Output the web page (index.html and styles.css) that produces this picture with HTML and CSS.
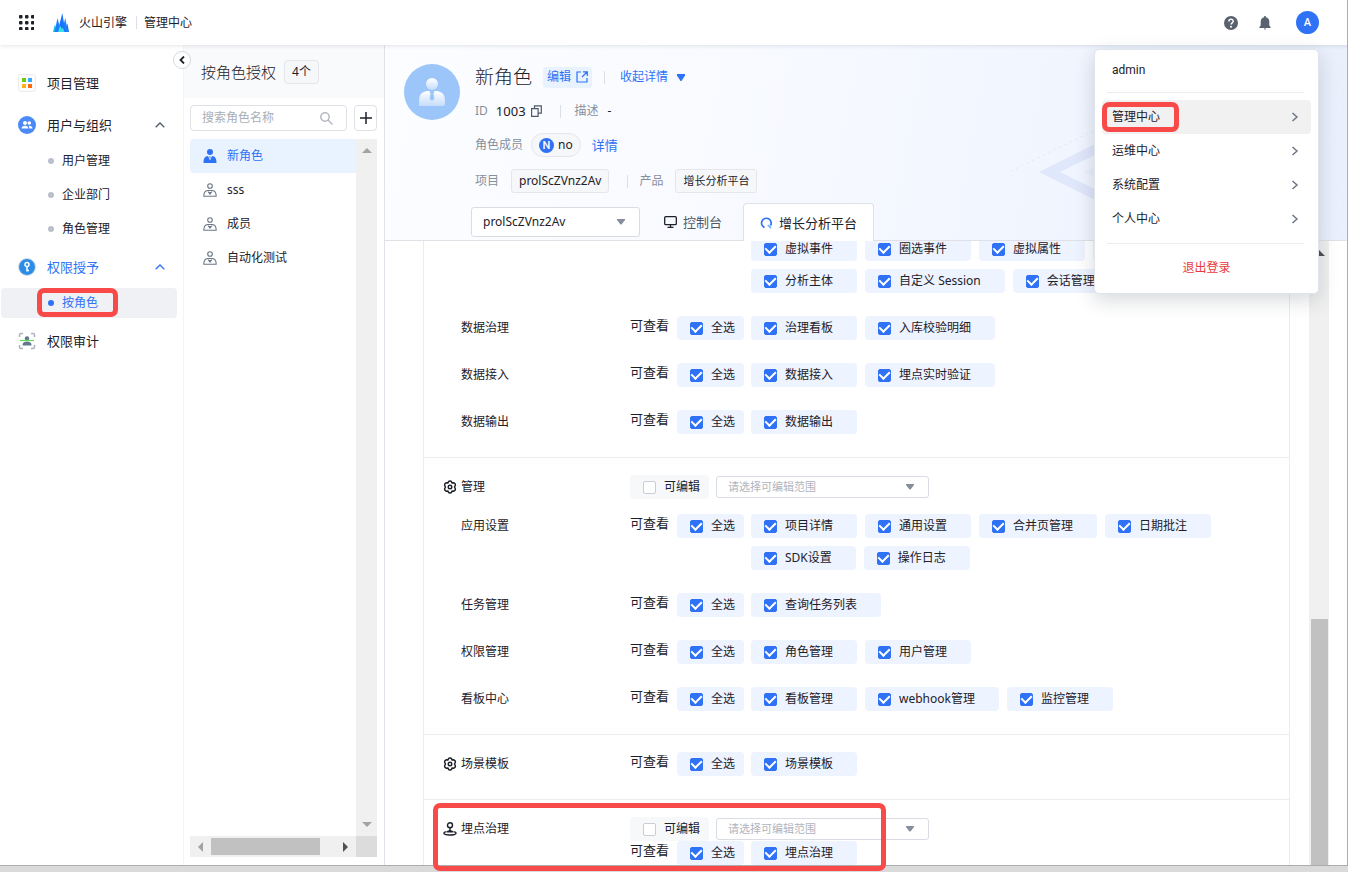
FILE: index.html
```html
<!DOCTYPE html>
<html lang="zh-CN">
<head>
<meta charset="utf-8">
<title>管理中心</title>
<link rel="stylesheet" href="styles.css">
</head>
<body>
<svg class="defs" aria-hidden="true">
  <symbol id="gear" viewBox="0 0 14 14"><path d="M5.600 1.500 7 .9l1.400.6.6 1.400 1.600-.2 1.700 1.300v1.500L11.500 7l.8 1.500V10l-1.700 1.300-1.600-.2-.6 1.400-1.400.6-1.400-.6-.6-1.400-1.600.2L1.700 10V8.500L2.500 7l-.8-1.500V4l1.700-1.300 1.600.2z" fill="none" stroke="#1d2129" stroke-width="1.500" stroke-linejoin="round"/><circle cx="7" cy="7" r="1.800" fill="none" stroke="#1d2129" stroke-width="1.400"/></symbol>
  <symbol id="person" viewBox="0 0 14 14"><circle cx="7" cy="3" r="2.300" fill="none" stroke="#6b7785" stroke-width="1.100"/><path d="M4.600 7.500C2 7.800.8 9.400.8 13.300h12.400c0-3.900-1.200-5.500-3.800-5.800z" fill="none" stroke="#6b7785" stroke-width="1.100" stroke-linejoin="round"/><path d="M5 8.500L7 11l2-2.500M7 9v2.500" fill="none" stroke="#6b7785" stroke-width="1.100"/></symbol>
  <symbol id="down" viewBox="0 0 8 6"><path d="M0 0h8v1L4.500 5.500h-1L0 1z" fill="currentColor"/></symbol>
  <symbol id="right" viewBox="0 0 8 10"><path d="M1.500 1l4.500 4-4.500 4" fill="none" stroke="#6b7785" stroke-width="1.500"/></symbol>
  <symbol id="up" viewBox="0 0 10 6"><path d="M.7 5.300L5 1l4.300 4.300" fill="none" stroke="currentColor" stroke-width="1.300"/></symbol>
</svg>

<header class="topbar">
  <button class="plain" aria-label="应用"><svg width="15" height="15" viewBox="0 0 15 15" fill="#1d2129"><rect width="3.500" height="3.500" rx="1"/><rect x="6" width="3.500" height="3.500" rx="1"/><rect x="12" width="3.500" height="3.500" rx="1"/><rect y="6" width="3.500" height="3.500" rx="1"/><rect x="6" y="6" width="3.500" height="3.500" rx="1"/><rect x="12" y="6" width="3.500" height="3.500" rx="1"/><rect y="12" width="3.500" height="3.500" rx="1"/><rect x="6" y="12" width="3.500" height="3.500" rx="1"/><rect x="12" y="12" width="3.500" height="3.500" rx="1"/></svg></button>
  <a class="brand" href="#"><svg width="16" height="19" viewBox="0 0 16 19"><path d="M0 19L1.800 11.500 5 19z" fill="#1cc8e6"/><path d="M11 19l3.400-8.500L16 19z" fill="#1c6cf5"/><path d="M1.500 19L4.500 5 8 19z" fill="#1e80ff"/><path d="M9 19l3.200-14L15 19z" fill="#1e80ff"/><path d="M4.500 19L9.300 0l3.200 19z" fill="#1a74ff"/><path d="M5 19L7 12.500l1.800 3.500 1-1.500L11.500 19z" fill="#3be0e3"/></svg><span>火山引擎</span></a>
  <i class="vline"></i>
  <span class="app-name">管理中心</span>
  <nav class="tools">
    <button class="plain" aria-label="帮助"><svg width="14" height="14" viewBox="0 0 14 14"><circle cx="7" cy="7" r="7" fill="#59626e"/><path d="M4.900 5.500C4.900 2.500 9.200 2.700 9.200 5.200 9.200 6.800 7 6.800 7 8.600" fill="none" stroke="#fff" stroke-width="1.500"/><circle cx="7" cy="10.800" r="1" fill="#fff"/></svg></button>
    <button class="plain" aria-label="通知"><svg width="12" height="14" viewBox="0 0 12 14" fill="#59626e"><path d="M5.200 0h1.600v1.200C9 1.700 10.300 3.300 10.300 5.500V9.500L11.600 11v1H.4v-1l1.300-1.500v-4C1.700 3.300 3 1.700 5.200 1.200zM4.800 12.600h2.400L6 14z"/></svg></button>
    <button class="me" aria-label="账户">A</button>
  </nav>
</header>

<div class="body">
  <aside class="sidebar">
    <button class="collapse" aria-label="收起"><svg width="6" height="8" viewBox="0 0 6 8"><path d="M5 .5L1.500 4 5 7.500" fill="none" stroke="#1d2129" stroke-width="1.800"/></svg></button>
    <ul class="menu">
      <li><a class="group" href="#"><svg width="18" height="18" viewBox="0 0 18 18"><rect x=".5" y=".5" width="17" height="17" rx="2" fill="#fbfbfb" stroke="#ececec"/><rect x="4" y="4" width="4" height="4" fill="#6ccb12"/><rect x="10" y="4" width="4" height="4" fill="#30adf5"/><rect x="4" y="10" width="4" height="4" fill="#ffb11f"/><rect x="10" y="10" width="4" height="4" fill="#ff6a0a"/></svg><span>项目管理</span></a></li>
      <li><a class="group" href="#"><svg width="18" height="18" viewBox="0 0 18 18"><circle cx="9" cy="9" r="9" fill="#4b8af6"/><g fill="#fff"><circle cx="7" cy="7" r="2"/><circle cx="11.300" cy="7" r="1.800"/><path d="M3.500 12.500C3.700 10.500 5 9.700 7 9.700s3.200.8 3.400 2.800zM11.300 12.500c0-1.300-.3-2-.9-2.700 2.300-.4 4 .5 4.100 2.700z"/></g></svg><span>用户与组织</span><svg class="chev" width="10" height="6"><use href="#up"/></svg></a>
        <ul class="sub">
          <li><a href="#">用户管理</a></li>
          <li><a href="#">企业部门</a></li>
          <li><a href="#">角色管理</a></li>
        </ul></li>
      <li><a class="group on" href="#"><svg width="18" height="18" viewBox="0 0 18 18"><circle cx="9" cy="9" r="8.500" fill="#2b8de8" stroke="#dde1e8"/><circle cx="9" cy="6.500" r="2" fill="none" stroke="#fff" stroke-width="1.500"/><path d="M9 8.500v5M9 12.500h2" stroke="#fff" stroke-width="1.500"/></svg><span>权限授予</span><svg class="chev" width="10" height="6"><use href="#up"/></svg></a>
        <ul class="sub">
          <li><a class="on" href="#">按角色<i class="mark mark-side"></i></a></li>
        </ul></li>
      <li><a class="group" href="#"><svg width="18" height="18" viewBox="0 0 18 18"><path d="M1.500 5V3q0-1.500 1.500-1.500h2M13 1.500h2q1.500 0 1.500 1.500v2M1.500 13v2q0 1.500 1.500 1.500h2M13 16.500h2q1.500 0 1.500-1.500v-2" fill="none" stroke="#a9b2be" stroke-width="1.500"/><circle cx="9" cy="6.500" r="2.200" fill="#62788f"/><path d="M4.500 13.500c0-3 1.500-4 4.500-4s4.500 1 4.500 4z" fill="#62788f"/><path d="M2 8.500h14" stroke="#63dc54" stroke-width="1.200"/></svg><span>权限审计</span></a></li>
    </ul>
  </aside>

  <section class="roles">
    <div class="roles-head"><h2>按角色授权</h2><span class="count">4个</span></div>
    <div class="search-row">
      <label class="search"><input type="text" placeholder="搜索角色名称" aria-label="搜索角色名称"><svg width="13" height="13" viewBox="0 0 13 13" fill="none" stroke="#b5b9c2" stroke-width="1.500"><circle cx="5" cy="5" r="4.200"/><path d="M8 8l4.500 4.500"/></svg></label>
      <button class="add" aria-label="添加"><svg width="12" height="12"><path d="M6 0v12M0 6h12" stroke="#1d2129" stroke-width="1.500"/></svg></button>
    </div>
    <div class="list-box">
      <ul class="role-list">
        <li><a class="on" href="#"><svg width="14" height="14" viewBox="0 0 14 14" fill="#2f72f6"><circle cx="7" cy="3" r="3"/><path d="M.5 14C.5 9 2 7.500 5 7l2 4.500L9 7c3 .5 4.500 2 4.500 7z"/><path d="M6.200 7.500h1.600L7 10z"/></svg>新角色</a></li>
        <li><a href="#"><svg width="14" height="14"><use href="#person"/></svg>sss</a></li>
        <li><a href="#"><svg width="14" height="14"><use href="#person"/></svg>成员</a></li>
        <li><a href="#"><svg width="14" height="14"><use href="#person"/></svg>自动化测试</a></li>
      </ul>
      <div class="vbar"><svg width="10" height="5"><path d="M0 5l5-5 5 5z" fill="#a3a3a3"/></svg><svg width="10" height="5"><path d="M0 0l5 5 5-5z" fill="#a3a3a3"/></svg></div>
      <div class="hbar"><svg width="5" height="10"><path d="M5 0L0 5l5 5z" fill="#a3a3a3"/></svg><i></i><svg width="5" height="10"><path d="M0 0l5 5-5 5z" fill="#505050"/></svg></div>
      <div class="corner"></div>
    </div>
  </section>

  <main class="detail">
    <div class="hero">
      <svg class="deco" width="300" height="140" viewBox="0 0 300 140"><path d="M4 72L140 4l136 68-136 68zM25 72l115 56 115-56-115-56z" fill="#dfe7fa" fill-rule="evenodd"/><path d="M48 72l92-45 92 45-92 45z" fill="#e9effc"/></svg>
      <svg class="dots" width="90" height="46" viewBox="0 0 90 46"><path d="M2 44L88 2" stroke="#cddaf8" stroke-dasharray="1 5"/></svg>
      <div class="hero-top">
        <svg class="avatar" width="56" height="56" viewBox="0 0 56 56"><defs><linearGradient id="av" x1="0" y1="0" x2="0" y2="1"><stop offset="0" stop-color="#fff"/><stop offset="1" stop-color="#c4dcfb"/></linearGradient></defs><circle cx="28" cy="28" r="28" fill="#9cc5fa"/><circle cx="28" cy="20" r="6" fill="url(#av)"/><path d="M15 42V36q0-8 8-9h2.500l1 3-1 4.500L28 37l2.500-2.500-1-4.500 1-3H33q8 1 8 9v4q0 2-2 2z" fill="url(#av)"/></svg>
        <div class="facts">
          <div class="fact fact-title"><h1>新角色</h1><button class="edit">编辑<svg width="12" height="12" viewBox="0 0 12 12" fill="none" stroke="#2f72f6" stroke-width="1.200"><path d="M5 1H1v10h10V7M7 .8h4.300V5M11 1L6 6"/></svg></button><i class="vline"></i><button class="toggle">收起详情<svg width="8" height="7"><path d="M0 0h8v1.500L4.500 7h-1L0 1.500z" fill="#2f72f6"/></svg></button></div>
          <div class="fact"><span class="dim">ID</span><span class="id">1003</span><svg class="copy" width="11" height="12" viewBox="0 0 11 12" fill="none" stroke="#4e5969" stroke-width="1.200"><path d="M.6 3.600h6.500v7.800H.6zM3.500 3.500V.8h6.800v7.400H7.500"/></svg><i class="vline"></i><span class="dim">描述</span><span>-</span></div>
          <div class="fact"><span class="dim">角色成员</span><span class="member"><b>N</b>no</span><a class="more" href="#">详情</a></div>
          <div class="fact"><span class="dim">项目</span><span class="tag tag-project">prolScZVnz2Av</span><i class="vline"></i><span class="dim">产品</span><span class="tag">增长分析平台</span></div>
        </div>
      </div>
      <div class="tabs">
        <label class="select select-project"><select aria-label="项目"><option>prolScZVnz2Av</option></select><svg width="8" height="6"><use href="#down"/></svg></label>
        <button class="tab"><svg width="13" height="12" viewBox="0 0 13 12" fill="none" stroke="#1d2129" stroke-width="1.300"><rect x=".7" y=".7" width="11.600" height="8" rx="1"/><path d="M6.500 9v2M3.500 11.300h6"/></svg>控制台</button>
        <button class="tab on"><svg width="13" height="12" viewBox="0 0 13 12" fill="none" stroke-width="1.700"><path d="M4.500 10.500A4.800 4.800 0 1 1 10.500 8.500" stroke="#2f72f6"/><path d="M8 8l3 3.200" stroke="#6db1fb"/></svg>增长分析平台</button>
      </div>
    </div>

    <div class="scroll">
      <div class="perms">
        <section class="perm-section">
          <div class="row"><span class="name"></span><span class="view"></span><div class="all ghost"></div><div class="chips">
            <label class="chip"><input type="checkbox" checked>虚拟事件</label><label class="chip"><input type="checkbox" checked>圈选事件</label><label class="chip"><input type="checkbox" checked>虚拟属性</label><span class="chip blank"></span><label class="chip"><input type="checkbox" checked>分析主体</label><label class="chip"><input type="checkbox" checked>自定义 Session</label><label class="chip"><input type="checkbox" checked>会话管理</label></div></div>
          <div class="row"><span class="name">数据治理</span><span class="view">可查看</span><label class="chip all"><input type="checkbox" checked>全选</label><div class="chips"><label class="chip"><input type="checkbox" checked>治理看板</label><label class="chip"><input type="checkbox" checked>入库校验明细</label></div></div>
          <div class="row"><span class="name">数据接入</span><span class="view">可查看</span><label class="chip all"><input type="checkbox" checked>全选</label><div class="chips"><label class="chip"><input type="checkbox" checked>数据接入</label><label class="chip"><input type="checkbox" checked>埋点实时验证</label></div></div>
          <div class="row"><span class="name">数据输出</span><span class="view">可查看</span><label class="chip all"><input type="checkbox" checked>全选</label><div class="chips"><label class="chip"><input type="checkbox" checked>数据输出</label></div></div>
        </section>
        <section class="perm-section">
          <div class="row edit-row"><span class="name"><svg width="14" height="14"><use href="#gear"/></svg>管理</span><label class="chip editable"><input type="checkbox">可编辑</label><label class="select select-scope"><select aria-label="可编辑范围"><option>请选择可编辑范围</option></select><svg width="8" height="6"><use href="#down"/></svg></label></div>
          <div class="row"><span class="name">应用设置</span><span class="view">可查看</span><label class="chip all"><input type="checkbox" checked>全选</label><div class="chips"><label class="chip"><input type="checkbox" checked>项目详情</label><label class="chip"><input type="checkbox" checked>通用设置</label><label class="chip"><input type="checkbox" checked>合并页管理</label><label class="chip"><input type="checkbox" checked>日期批注</label><label class="chip"><input type="checkbox" checked>SDK设置</label><label class="chip"><input type="checkbox" checked>操作日志</label></div></div>
          <div class="row"><span class="name">任务管理</span><span class="view">可查看</span><label class="chip all"><input type="checkbox" checked>全选</label><div class="chips"><label class="chip"><input type="checkbox" checked>查询任务列表</label></div></div>
          <div class="row"><span class="name">权限管理</span><span class="view">可查看</span><label class="chip all"><input type="checkbox" checked>全选</label><div class="chips"><label class="chip"><input type="checkbox" checked>角色管理</label><label class="chip"><input type="checkbox" checked>用户管理</label></div></div>
          <div class="row"><span class="name">看板中心</span><span class="view">可查看</span><label class="chip all"><input type="checkbox" checked>全选</label><div class="chips"><label class="chip"><input type="checkbox" checked>看板管理</label><label class="chip"><input type="checkbox" checked>webhook管理</label><label class="chip"><input type="checkbox" checked>监控管理</label></div></div>
        </section>
        <section class="perm-section">
          <div class="row"><span class="name"><svg width="14" height="14"><use href="#gear"/></svg>场景模板</span><span class="view">可查看</span><label class="chip all"><input type="checkbox" checked>全选</label><div class="chips"><label class="chip"><input type="checkbox" checked>场景模板</label></div></div>
        </section>
        <section class="perm-section last">
          <div class="row edit-row"><span class="name"><svg width="14" height="14" viewBox="0 0 14 14" fill="none" stroke="#1d2129" stroke-width="1.400"><circle cx="7" cy="3.300" r="2.500"/><path d="M7 5.800V8M7 8C6.500 9 5.500 9.500 4 9.700h6C8.500 9.500 7.500 9 7 8M3.500 9.600C1.800 9.900.9 10.400.9 11.100c0 1.200 2.600 1.900 6.100 1.900s6.100-.7 6.100-1.900c0-.7-.9-1.200-2.600-1.500"/></svg>埋点治理</span><label class="chip editable"><input type="checkbox">可编辑</label><label class="select select-scope"><select aria-label="可编辑范围"><option>请选择可编辑范围</option></select><svg width="8" height="6"><use href="#down"/></svg></label></div>
          <div class="row"><span class="name"></span><span class="view">可查看</span><label class="chip all"><input type="checkbox" checked>全选</label><div class="chips"><label class="chip"><input type="checkbox" checked>埋点治理</label></div></div>
        </section>
      </div>
      <div class="page-bar"><svg width="12" height="6"><path d="M0 6l6-6 6 6z" fill="#505050"/></svg><i></i></div>
    </div>
  </main>
</div>
<footer class="edge"></footer>

<div class="account">
  <div class="who">admin</div>
  <ul>
    <li><a class="on" href="#">管理中心<svg width="8" height="10"><use href="#right"/></svg><i class="mark mark-menu"></i></a></li>
    <li><a href="#">运维中心<svg width="8" height="10"><use href="#right"/></svg></a></li>
    <li><a href="#">系统配置<svg width="8" height="10"><use href="#right"/></svg></a></li>
    <li><a href="#">个人中心<svg width="8" height="10"><use href="#right"/></svg></a></li>
  </ul>
  <button class="logout">退出登录</button>
</div>
<i class="mark mark-section"></i>
</body>
</html>
```

FILE: styles.css
```css
* { box-sizing: border-box; }
body {
  margin: 0;
  height: 100vh;
  display: flex;
  flex-direction: column;
  position: relative;
  overflow: hidden;
  background: #fff;
  color: #1d2129;
  font: 400 12px/20px "Noto Sans", "Noto Sans CJK SC", sans-serif;
}
ul { list-style: none; margin: 0; padding: 0; }
h1, h2 { margin: 0; font-weight: 300; }
a { color: inherit; text-decoration: none; }
button, input, select { font: inherit; color: inherit; }
button { border: 0; padding: 0; background: none; display: inline-flex; align-items: center; }
svg { flex: none; display: block; }
.defs { position: absolute; width: 0; height: 0; }
.vline { width: 1px; height: 13px; background: #dcdfe5; }

.topbar {
  display: flex;
  align-items: center;
  height: 45px;
  flex: none;
  padding: 0 28px 0 19px;
  border-right: 1px solid #adadad;
  box-shadow: 0 1px 4px rgba(30, 40, 60, .12);
  position: relative;
  z-index: 2;
  background: #fff;
}
.brand { display: flex; align-items: center; gap: 10px; margin: 0 9px 0 19px; }
.app-name { margin-left: 7px; }
.tools { display: flex; align-items: center; margin-left: auto; gap: 21px; }
.me {
  width: 23px; height: 23px; margin-left: 4px;
  border-radius: 50%;
  justify-content: center;
  background: #2f72f6; color: #fff;
  font: 500 11px/20px Roboto, sans-serif;
}

.body { flex: 1; min-height: 0; display: flex; }
.sidebar { width: 184px; flex: none; position: relative; border-right: 1px solid #f3f4f6; }
.collapse {
  position: absolute; top: 6px; right: -8px;
  width: 18px; height: 18px;
  border: 1px solid #d5d8de; border-radius: 50%;
  justify-content: center;
  background: #fff;
  z-index: 1;
}
.menu { display: flex; flex-direction: column; gap: 4px; padding: 19px 6px 0 1px; }
.group { display: flex; align-items: center; height: 38px; padding: 0 12px 0 17px; gap: 11px; font-size: 13px; }
.group span { flex: 1; }
.chev { color: #4e5969; }
.group.on, .group.on .chev { color: #2f72f6; }
.sub { display: flex; flex-direction: column; gap: 4px; margin-top: 2px; }
.sub a { display: flex; align-items: center; gap: 8px; height: 30px; padding-left: 47px; border-radius: 4px; position: relative; }
.sub a::before { content: ""; width: 6px; height: 6px; border-radius: 50%; background: #b9bfcb; }
.sub a.on { background: #f0f1f5; color: #2f72f6; }
.sub a.on::before { background: #2f72f6; }

.roles { width: 201px; flex: none; display: flex; flex-direction: column; border-right: 1px solid #e0e2ea; }
.roles-head { display: flex; align-items: center; gap: 8px; height: 53px; padding: 0 0 0 17px; background: #f9fafc; }
.roles-head h2 { font-size: 15px; }
.count { padding: 1px 7px; border: 1px solid #e5e6eb; border-radius: 4px; background: #f6f7f9; }
.search-row { display: flex; gap: 7px; padding: 7px 7px 8px 6px; }
.search { flex: 1; min-width: 0; display: flex; align-items: center; height: 26px; padding: 0 13px 0 11px; border: 1px solid #dfe1e7; border-radius: 4px; }
.search input { flex: 1; min-width: 0; border: 0; padding: 0; outline: 0; background: none; }
.search input::placeholder { color: #a9aeb8; }
.add { width: 23px; height: 26px; justify-content: center; border: 1px solid #dfe1e7; border-radius: 4px; }
.list-box { flex: 1; display: grid; grid-template: 1fr 21px / 1fr 21px; margin: 0 7px 8px 6px; }
.role-list a { display: flex; align-items: center; gap: 10px; height: 34px; padding-left: 13px; }
.role-list a.on { background: #e8f3ff; color: #2f72f6; border-radius: 4px 0 0 4px; }
.vbar { background: #f0f0f0; display: flex; flex-direction: column; align-items: center; justify-content: space-between; padding: 9px 0 9px; }
.hbar { background: #f0f0f0; display: flex; align-items: center; padding: 0 8px; }
.hbar i { flex: 0 0 109px; height: 17px; margin: 0 auto 0 8px; background: #c1c1c1; }
.corner { background: #dcdcdc; }

.detail { flex: 1; min-width: 0; display: flex; flex-direction: column; border-right: 1px solid #adadad; }
.hero { position: relative; border-bottom: 1px solid #dfe1e7; background: linear-gradient(100deg, #fcfdff 0%, #f8faff 35%, #f2f6ff 65%, #e9effc 100%); }
.deco { position: absolute; right: 12px; top: 55px; }
.dots { position: absolute; right: 248px; top: 82px; }
.hero-top { display: flex; gap: 15px; padding: 19px 19px 10px; position: relative; }
.facts { display: flex; flex-direction: column; gap: 12px; padding-top: 1px; }
.fact { display: flex; align-items: center; min-height: 20px; height: 24px; }
.fact:nth-child(2) { height: 20px; }
.fact h1 { font-size: 19px; line-height: 24px; }
.dim { color: #86909c; }
.edit { height: 21px; margin: 0 12px 0 11px; padding: 0 4px; gap: 5px; border-radius: 3px; background: #e8f3ff; color: #2f72f6; }
.toggle { margin-left: 15px; gap: 9px; color: #2f72f6; }
.id { margin: 0 5px 0 8px; font-size: 13px; }
.copy { margin-right: 18px; }
.copy + .vline { margin-right: 14px; }
.fact .dim + span:last-child:not(.tag) { margin-left: 9px; }
.member { display: flex; align-items: center; gap: 4px; height: 24px; margin: 0 11px 0 8px; padding: 0 7px; border: 1px solid #e5e6eb; border-radius: 12px; background: #f6f7f9; }
.member b { width: 15px; height: 15px; border-radius: 50%; background: #2f72f6; color: #fff; font: 500 11px/15px Roboto, sans-serif; text-align: center; }
.more { font-size: 13px; color: #2f72f6; }
.tag { height: 24px; margin-left: 12px; padding: 0 7px; border: 1px solid #e5e6eb; border-radius: 3px; background: #f6f7f9; font-size: 11px; line-height: 22px; }
.tag-project { margin-right: 18px; font-size: 12px; }
.tag-project + .vline { margin-right: 11px; }
.tabs { display: flex; align-items: center; height: 38px; padding-left: 86px; margin-bottom: -1px; position: relative; }
.select { display: flex; align-items: center; position: relative; border: 1px solid #d9dce3; border-radius: 3px; background: #fff; }
.select select { appearance: none; width: 100%; height: 100%; border: 0; padding: 0 24px 0 11px; background: none; outline: 0; }
.select svg { position: absolute; right: 14px; color: #868e9b; pointer-events: none; }
.select-project { width: 169px; height: 30px; }
.tab { gap: 6px; height: 38px; padding: 0 21px 0 24px; font-size: 13px; color: #4e5969; }
.tab.on { padding: 0 16px; border: 1px solid #dfe1e7; border-bottom: 0; border-radius: 4px 4px 0 0; background: #fff; color: #1d2129; }

.scroll { flex: 1; min-height: 0; display: flex; gap: 19px; padding: 0 18px 0 38px; overflow: hidden; }
.perms { flex: 1; min-width: 0; display: flex; flex-direction: column; justify-content: flex-end; border: solid #ebecef; border-width: 0 1px; }
.perm-section + .perm-section { border-top: 1px solid #ebecef; padding-top: 17px; }
.row { display: flex; align-items: flex-start; padding-bottom: 23px; }
.name { width: 206px; flex: none; display: flex; align-items: center; gap: 4px; height: 24px; padding-left: 37px; }
.name svg { margin-left: -18px; }
.view { width: 47px; flex: none; font-size: 13px; line-height: 18px; }
.chips { flex: 1; display: flex; flex-wrap: wrap; gap: 8px; }
.chip { display: flex; align-items: center; gap: 8px; height: 24px; padding: 0 24px 0 13px; border-radius: 4px; background: #edf3ff; white-space: nowrap; }
.all { width: 67px; flex: none; margin-right: 7px; padding-right: 0; }
.blank { width: 106px; }
.edit-row { padding-bottom: 15px; }
.last .row { padding-bottom: 0; }
.editable { padding-right: 9px; margin-right: 7px; background: #f7f8fa; }
.select-scope { width: 213px; height: 22px; margin-top: 1px; color: #b0b4bd; font-size: 11px; }
.chip input { appearance: none; display: flex; align-items: center; justify-content: center; width: 13px; height: 13px; margin: 0; border: 1px solid #c9cdd4; border-radius: 2px; background: #fff; }
.chip input:checked { border-color: #2f72f6; background: #2f72f6; }
.chip input:checked::after { content: ""; width: 5px; height: 8px; margin-bottom: 2px; border: solid #fff; border-width: 0 2px 2px 0; transform: rotate(45deg); }
.page-bar { width: 20px; background: #f0f0f0; display: flex; flex-direction: column; align-items: center; justify-content: space-between; padding-top: 9px; }
.page-bar i { width: 17px; height: 246px; background: #c1c1c1; }

.edge { flex: none; height: 7px; border-top: 1px solid #adadad; background: #dadada; }

.account { position: absolute; z-index: 3; top: 49px; right: 29px; width: 225px; padding: 0 7px; border: 1px solid #e1e4ea; border-radius: 5px; background: #fff; box-shadow: 0 6px 20px rgba(30, 40, 60, .18); }
.who { margin: 0 7px 0 5px; padding: 10px 5px 12px; border-bottom: 1px solid #ebecef; font-family: Roboto, sans-serif; }
.account ul { margin: 7px 0; }
.account li a { display: flex; align-items: center; justify-content: space-between; height: 34px; padding: 0 12px 0 10px; border-radius: 4px; position: relative; }
.account li a.on { background: #f1f1f1; }
.logout { width: 100%; height: 50px; justify-content: center; color: #e83a3a; position: relative; }
.logout::before { content: ""; position: absolute; top: 0; left: 5px; right: 7px; height: 1px; background: #ebecef; }

.mark { position: absolute; border: 5px solid #f84b49; border-radius: 7px; pointer-events: none; }
.mark-side { left: 36px; top: 0; width: 81px; height: 29px; }
.mark-menu { left: 0; top: 2px; width: 77px; height: 30px; }
.mark-section { left: 433px; bottom: 1px; width: 453px; height: 68px; z-index: 4; }
```
